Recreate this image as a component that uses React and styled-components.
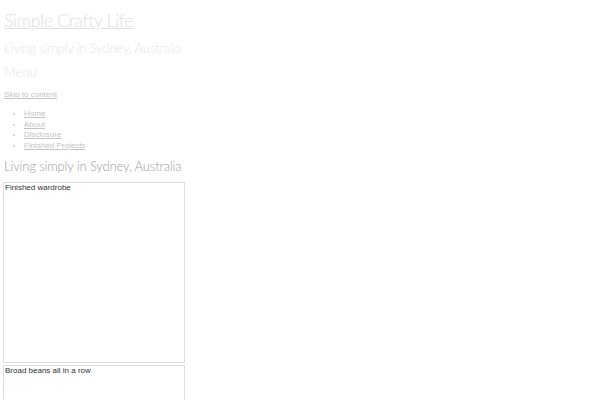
import React from 'react';
import styled, { createGlobalStyle } from 'styled-components';

const Global = createGlobalStyle`
  html, body { margin: 0; padding: 0; background: #fff; }
  body { font-family: "Liberation Sans", Arial, sans-serif; }
`;

const Page = styled.div`
  padding: 0 4px;
`;

const Header = styled.header`
  display: flex;
  flex-direction: column;
  padding-top: 9px;
`;

const SiteTitle = styled.a`
  font-family: "Lato", "Liberation Sans", sans-serif;
  font-weight: 300;
  font-size: 18px;
  line-height: 22px;
  letter-spacing: -0.45px;
  color: #e0e0e0;
  text-decoration: underline;
  align-self: flex-start;
`;

const Tagline = styled.p`
  font-family: "Lato", "Liberation Sans", sans-serif;
  font-weight: 300;
  font-size: 13px;
  line-height: 16px;
  letter-spacing: -0.15px;
  color: #e6e6e6;
  margin: 9px 0 0;
`;

const MenuLabel = styled.div`
  font-family: "Lato", "Liberation Sans", sans-serif;
  font-weight: 300;
  font-size: 13px;
  line-height: 16px;
  color: #e6e6e6;
  margin-top: 8px;
`;

const SkipLink = styled.a`
  font-size: 8px;
  line-height: 10px;
  color: #c4c4c4;
  text-decoration: underline;
  margin-top: 10px;
  align-self: flex-start;
`;

const NavList = styled.ul`
  margin: 9px 0 0;
  padding-left: 20px;
  font-size: 8px;
  line-height: 10.5px;
  color: #cccccc;
`;

const NavItem = styled.li`
  a { color: #c4c4c4; text-decoration: underline; }
`;

const SectionTitle = styled.h2`
  font-family: "Lato", "Liberation Sans", sans-serif;
  font-weight: 300;
  font-size: 13px;
  line-height: 16px;
  letter-spacing: -0.15px;
  color: #a0a0a0;
  margin: 7px 0 0;
`;

const Gallery = styled.div`
  display: flex;
  flex-direction: column;
  gap: 2px;
  margin-top: 8px;
  margin-left: -1px;
`;

const Photo = styled.div`
  width: 179px;
  height: 179px;
  border: 1px solid #dedede;
  font-size: 8px;
  line-height: 10px;
  color: #333;
  padding: 0 0 0 1px;
`;

const links = ['Home', 'About', 'Disclosure', 'Finished Projects'];
const photos = ['Finished wardrobe', 'Broad beans all in a row'];

export default function App() {
  return (
    <Page>
      <Global />
      <Header>
        <SiteTitle href="#">Simple Crafty Life</SiteTitle>
        <Tagline>Living simply in Sydney, Australia</Tagline>
        <MenuLabel>Menu</MenuLabel>
        <SkipLink href="#">Skip to content</SkipLink>
        <NavList>
          {links.map((l) => (
            <NavItem key={l}><a href="#">{l}</a></NavItem>
          ))}
        </NavList>
      </Header>
      <SectionTitle>Living simply in Sydney, Australia</SectionTitle>
      <Gallery>
        {photos.map((p) => (
          <Photo key={p}>{p}</Photo>
        ))}
      </Gallery>
    </Page>
  );
}
